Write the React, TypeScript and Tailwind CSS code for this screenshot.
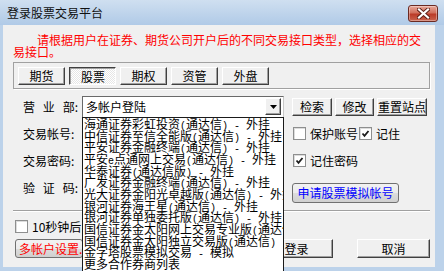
import React from 'react'

const BROKERS = [
  '海通证券彩虹投资(通达信) - 外挂',
  '中信证券至信全能版(通达信) - 外挂',
  '平安证券金融终端(通达信) - 外挂',
  '平安e点通网上交易(通达信) - 外挂',
  '华泰证券(通达信版) - 外挂',
  '广发证券金融终端(通达信) - 外挂',
  '光大证券金阳光卓越版(通达信) - 外挂',
  '银河证券海王星(通达信) - 外挂',
  '银河证券单独委托版(通达信) - 外挂',
  '国信证券金太阳网上交易专业版(通达信) - 外挂',
  '国信证券金太阳独立交易版(通达信) - 外挂',
  '金字塔股票模拟交易 - 模拟',
  '更多合作券商列表',
]

const TABS = ['期货', '股票', '期权', '资管', '外盘']

const raised =
  'border border-t-white border-l-white border-r-[#404040] border-b-[#404040] bg-[#f0f0f0] shadow-[inset_-1px_-1px_0_#a0a0a0]'

const themed =
  'rounded-[3px] border border-[#707070] bg-[linear-gradient(#f2f2f2,#ebebeb_50%,#dddddd_50%,#cfcfcf)]'

// half-width runs get a 6px monospace cell, like the old bitmap font
function Mixed({ text }: { text: string }) {
  const parts = text.split(/([\x20-\x7e]+)/)
  return (
    <>
      {parts.map((p, i) =>
        /^[\x20-\x7e]+$/.test(p) ? (
          <span key={i} className="whitespace-pre font-['Liberation_Mono',monospace] text-[10px]">
            {p}
          </span>
        ) : (
          <span key={i}>{p}</span>
        )
      )}
    </>
  )
}

function Check({ on }: { on?: boolean }) {
  return (
    <span className="flex h-[13px] w-[13px] shrink-0 items-center justify-center border border-[#8e8f8f] bg-white shadow-[inset_1px_1px_0_#dcdcdc]">
      {on && (
        <svg width="9" height="9" viewBox="0 0 9 9">
          <polyline points="1.5,4.5 3.5,6.8 7.5,2" fill="none" stroke="#1c1c1c" strokeWidth="1.8" />
        </svg>
      )}
    </span>
  )
}

function Spread({ chars }: { chars: string[] }) {
  return (
    <div className="flex w-[55px] justify-between">
      {chars.map((c) => (
        <span key={c}>{c}</span>
      ))}
    </div>
  )
}

export default function App() {
  return (
    <div className="relative h-[271px] w-[444px] overflow-hidden bg-[#bcd2ea] font-['Noto_Sans_CJK_SC','Noto_Sans',sans-serif] text-[12px] text-black">
      {/* title bar */}
      <div className="flex h-[25px] items-start justify-between bg-[linear-gradient(#cfdff0,#b0cae7)]">
        <div className="pl-[7px] pt-[6px] leading-[14px] text-[#101010]">登录股票交易平台</div>
        <div className="mr-[6px] mt-[5px] flex h-[17px] w-[30px] items-center justify-center rounded-[3px] border border-[#6b2a22] bg-[linear-gradient(#e8a899,#d1705d_45%,#bb3b28_55%,#c9634e)] shadow-[inset_0_0_0_1px_rgba(255,255,255,0.35)]">
          <svg width="13" height="11" viewBox="0 0 13 11">
            <path d="M2 1.5 L11 9.5 M11 1.5 L2 9.5" stroke="#5a1e16" strokeWidth="4" strokeLinecap="square" />
            <path d="M2 1.5 L11 9.5 M11 1.5 L2 9.5" stroke="#ffffff" strokeWidth="2.2" strokeLinecap="square" />
          </svg>
        </div>
      </div>

      {/* client area */}
      <div className="ml-[3px] h-[242px] w-[432px] bg-[#f0f0f0]">
        <div className="whitespace-nowrap pl-[10px] pt-[9px] leading-[12px] text-[#ff0000]">
          <div className="pl-[24px]">请根据用户在证券、期货公司开户后的不同交易接口类型，选择相应的交</div>
          <div>易接口。</div>
        </div>

        <div className="ml-[10px] mt-[4px] flex h-[27px] w-[417px] gap-[4px] border border-[#a0a0a0] pl-[4px] pt-[4px] shadow-[1px_1px_0_#ffffff]">
          {TABS.map((t) =>
            t === '股票' ? (
              <div
                key={t}
                className="flex h-[18px] w-[47px] items-center justify-center border border-t-[#404040] border-l-[#404040] border-r-white border-b-white bg-[repeating-conic-gradient(#ffffff_0%_25%,#e6e6e6_0%_50%)] bg-size-[2px_2px] pl-[1px] pt-[1px] shadow-[inset_1px_1px_0_#a0a0a0]"
              >
                {t}
              </div>
            ) : (
              <div key={t} className={`flex h-[18px] w-[47px] items-center justify-center ${raised}`}>
                {t}
              </div>
            )
          )}
        </div>

        {/* form */}
        <div className="mt-[4px] flex h-[110px]">
          <div className="ml-[20px] flex flex-col">
            <div className="flex h-[27px] items-center">
              <Spread chars={['营', '业', '部:']} />
              <div className="ml-[4px] flex h-[22px] w-[202px] items-center border border-t-[#696969] border-l-[#696969] border-r-[#c8c8c8] border-b-[#c8c8c8] bg-white pl-[3px] pr-[2px]">
                <span className="flex-1">多帐户登陆</span>
                <span className={`flex h-[17px] w-[16px] items-center justify-center ${raised}`}>
                  <svg width="7" height="4" viewBox="0 0 7 4">
                    <polygon points="0,0 7,0 3.5,4" fill="#000" />
                  </svg>
                </span>
              </div>
            </div>
            <div className="flex h-[27px] items-center">
              <Spread chars={['交易帐号:']} />
              <div className="ml-[4px] h-[20px] w-[190px] border border-[#7a7a7a] bg-white" />
            </div>
            <div className="flex h-[27px] items-center">
              <Spread chars={['交易密码:']} />
              <div className="ml-[4px] h-[20px] w-[190px] border border-[#7a7a7a] bg-white" />
            </div>
            <div className="flex h-[27px] items-center">
              <Spread chars={['验', '证', '码:']} />
              <div className="ml-[4px] h-[20px] w-[120px] border border-[#7a7a7a] bg-white" />
            </div>
          </div>

          <div className="ml-[8px] flex flex-col">
            <div className="flex h-[27px] items-center gap-[3px]">
              <div className={`flex h-[18px] w-[40px] items-center justify-center ${raised}`}>检索</div>
              <div className={`flex h-[18px] w-[39px] items-center justify-center ${raised}`}>修改</div>
              <div className={`flex h-[18px] w-[50px] items-center justify-center ${raised}`}>重置站点</div>
            </div>
            <div className="flex h-[27px] items-center pl-[1px]">
              <Check />
              <span className="ml-[4px]">保护账号</span>
              <span className="ml-[1px]">
                <Check on />
              </span>
              <span className="ml-[4px]">记住</span>
            </div>
            <div className="flex h-[27px] items-center pl-[1px]">
              <Check on />
              <span className="ml-[4px]">记住密码</span>
            </div>
            <div className={`mt-[9px] flex h-[20px] w-[107px] items-center justify-center text-[#0000ff] ${themed}`}>
              申请股票模拟帐号
            </div>
          </div>
        </div>

        <div className="ml-[10px] mt-[7px] h-[2px] w-[417px] border-t border-t-[#a0a0a0] border-b border-b-white" />

        <div className="ml-[12px] mt-[8px] flex h-[13px] items-center">
          <Check />
          <span className="ml-[4px]">10秒钟后</span>
        </div>

        <div className="mt-[6px] flex h-[19px] items-center">
          <div className={`ml-[12px] flex h-[19px] w-[68px] items-center overflow-hidden whitespace-nowrap pl-[3px] text-[#ff0000] ${themed}`}>
            多帐户设置...
          </div>
          <div className={`ml-[177px] flex h-[19px] w-[73px] items-center justify-center ${raised}`}>登录</div>
          <div className={`ml-[24px] flex h-[19px] w-[73px] items-center justify-center ${raised}`}>取消</div>
        </div>
      </div>

      {/* open drop-down list of the 营业部 combo */}
      <div className="absolute bottom-0 left-[82px] top-[117px] z-10 w-[202px] overflow-hidden border-x border-t border-[#1a1a1a] bg-white pl-[1px] text-[12px] leading-[11.67px] whitespace-nowrap">
        {BROKERS.map((b) => (
          <div key={b} className="h-[11.67px]">
            <Mixed text={b} />
          </div>
        ))}
      </div>
    </div>
  )
}
